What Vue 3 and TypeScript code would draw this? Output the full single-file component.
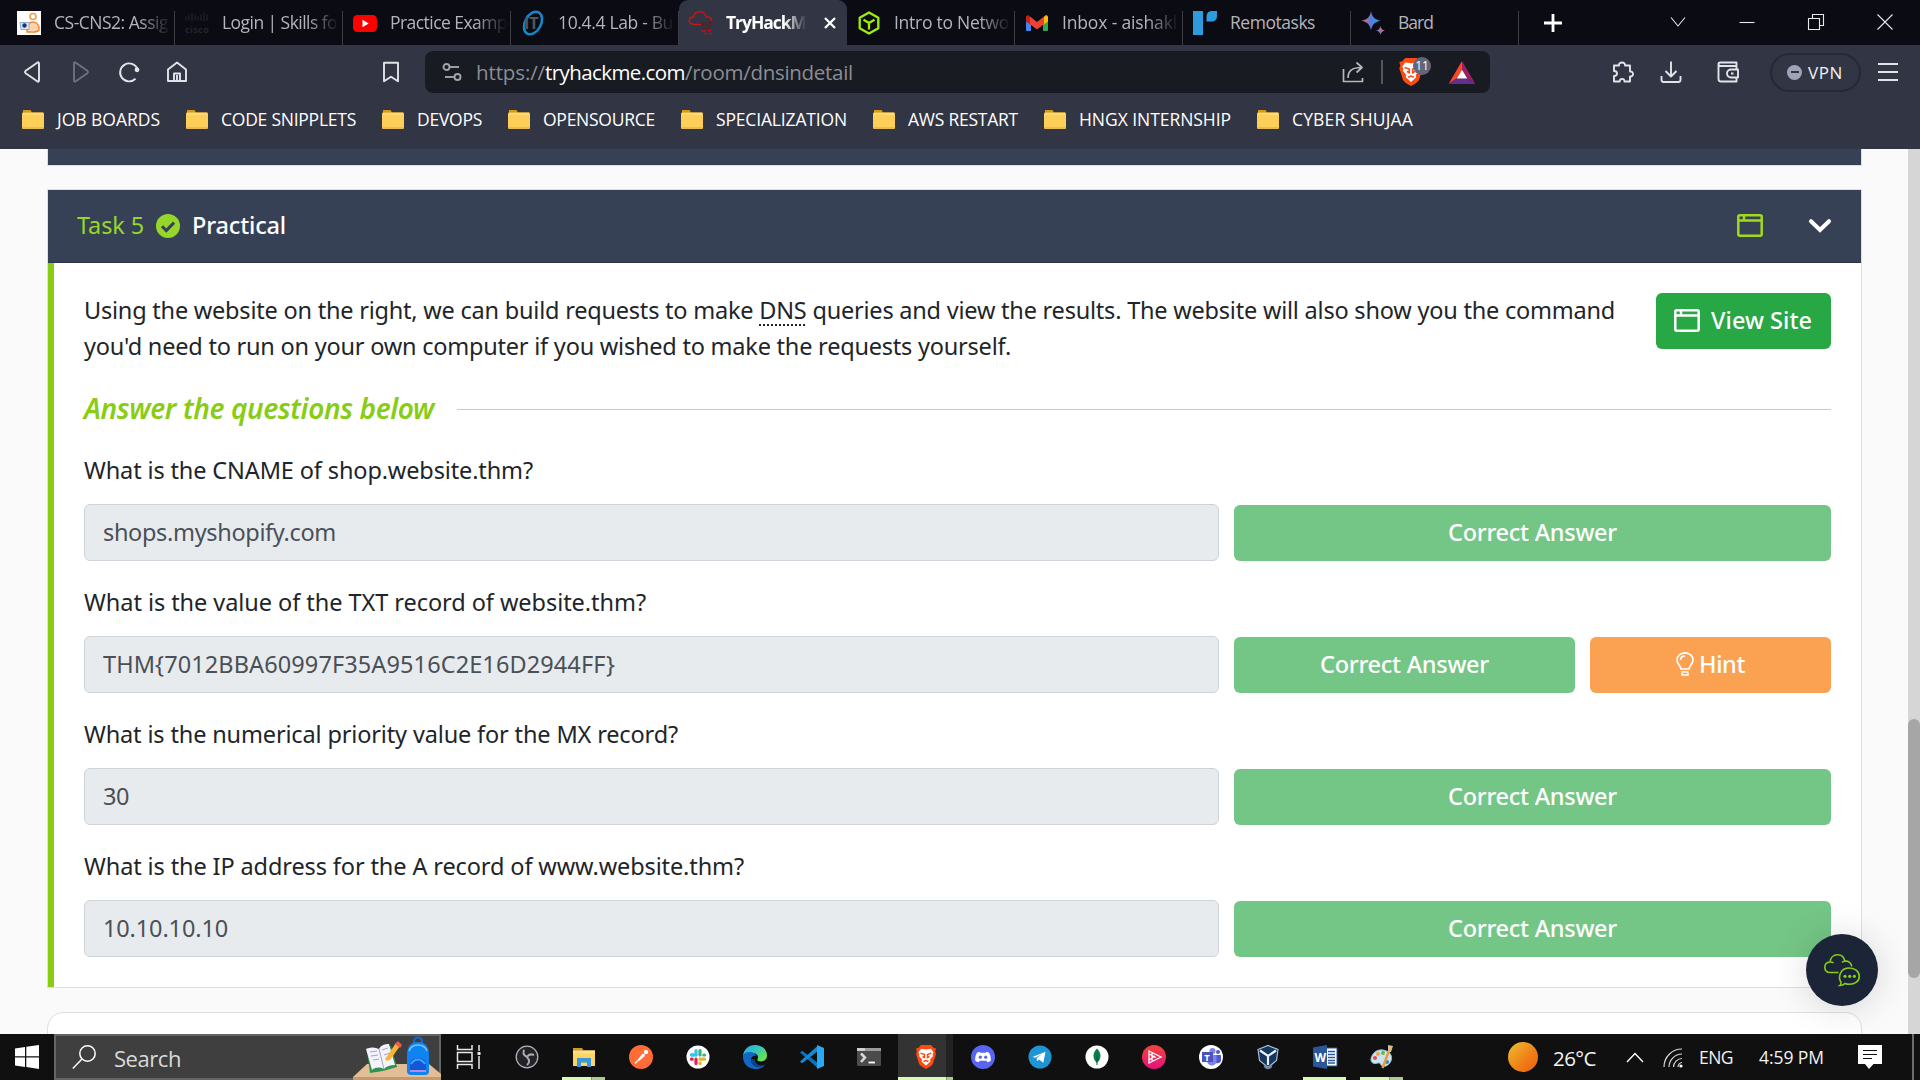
<script setup lang="ts">
const UI = '"Open Sans", "Noto Sans", sans-serif'
const PAGE = '"Noto Sans", "Open Sans", sans-serif'

const ctx = document.createElement('canvas').getContext('2d')

// Letter spacing that makes a label occupy exactly `width` pixels.
function track(text: string, width: number, size: number, family = UI, style = '400') {
  if (!ctx) return {}
  ctx.font = `${style} ${size}px ${family}`
  const natural = ctx.measureText(text).width
  return { letterSpacing: ((width - natural) / text.length).toFixed(3) + 'px' }
}

interface Tab { title: string; w: number; icon: string; active?: boolean; fade?: boolean }

const tabs: Tab[] = [
  { title: 'CS-CNS2: Assig', w: 114, fade: true, icon: '<rect width="24" height="24" fill="#fff"/><circle cx="16" cy="5.5" r="3" fill="none" stroke="#f59a4a" stroke-width="1.6"/><path d="M10 21c-1-6 2-10 6-10s7 4 6 8c-2 3-6 2-9 2z" fill="#fbd3ac" stroke="#f08a35" stroke-width="1.4"/><path d="M3 11.500h9v7H4z" fill="#dfe8f8" stroke="#98a6c8"/><circle cx="7.500" cy="14.500" r="2.200" fill="#12357c"/>' },
  { title: 'Login | Skills fo', w: 115, fade: true, icon: '<g stroke="#23232b" stroke-width="1.300" stroke-linecap="round"><path d="M1 6v3M4 4v5M7 2v8M10 4v5M13 6v3M16 4v5M19 2v8M22 4v5"/></g><text x="0" y="22" font-size="9.500" font-weight="700" textLength="24" fill="#23232b" font-family="Open Sans">cisco</text>' },
  { title: 'Practice Examp', w: 117, fade: true, icon: '<rect y="4" width="24" height="17" rx="4.500" fill="#f00"/><path d="M9.500 8.800v7.400l6.200-3.700z" fill="#fff"/>' },
  { title: '10.4.4 Lab - Bu', w: 115, fade: true, icon: '<ellipse cx="12" cy="12" rx="8" ry="12" transform="rotate(28 12 12)" fill="none" stroke="#1387c9" stroke-width="2.600"/><text x="3" y="18" font-size="16" font-weight="700" fill="#54565e" font-family="Open Sans">IT</text>' },
  { title: 'TryHackM', w: 80, active: true, fade: true, icon: '<path d="M12 13.500H5.500C2 13.500 0 11.500.4 9.200.8 7 2.600 6 4.500 6.200 5 3 7.500.8 10.700.8c3.300 0 5.600 2 6.300 5 3 0 5.500 1.600 5.800 4.200" fill="none" stroke="#c81414" stroke-width="1.600"/><path d="M13 11.500h4M19 11.500h4M12 14.500h3M17 14.500h6M14 17.500h7" stroke="#5c2029" stroke-width="1.800"/><path d="M12 20h5M19 19.500h3M15 22.500h3M20 22.500h3" stroke="#b5151b" stroke-width="1.500"/>' },
  { title: 'Intro to Netwo', w: 115, fade: true, icon: '<path d="M12 1.500l9.300 5.300v10.400L12 22.500 2.700 17.200V6.800zM6.500 8.800l5.500 3.200 5.500-3.200M12 12v6.500" fill="none" stroke="#9fef00" stroke-width="2.300" stroke-linejoin="round"/>' },
  { title: 'Inbox - aishakl', w: 115, fade: true, icon: '<path d="M1 6v12.500C1 19.500 1.500 20 2.500 20H6V9z" fill="#4285f4"/><path d="M18 9v11h3.500c1 0 1.500-.5 1.500-1.500V6z" fill="#34a853"/><path d="M1 6.500v4l5 3.600V7L4 4.800C2.500 3.600 1 4.700 1 6.500z" fill="#c5221f"/><path d="M23 6.500v4l-5 3.600V7l2-2.200c1.500-1.200 3-.1 3 1.700z" fill="#fbbc04"/><path d="M5 5.600l7 5.400 7-5.400v7.600l-7 5.400-7-5.400z" fill="#ea4335"/>' },
  { title: 'Remotasks', w: 85, icon: '<path d="M0 0h10v24H0z" fill="#2e9bdc"/><path d="M13.500 10.500V6c0-4 2-6 5.500-6h5v5c0 3.500-2 5.500-5.500 5.500z" fill="#2e9bdc"/>' },
  { title: 'Bard', w: 35, icon: '<defs><linearGradient id="bard" x1="0" x2="1"><stop offset="0" stop-color="#f0645a"/><stop offset=".5" stop-color="#5a7be0"/><stop offset="1" stop-color="#23a5e8"/></linearGradient><linearGradient id="bard2"><stop offset="0" stop-color="#5a7be0"/><stop offset="1" stop-color="#f0645a"/></linearGradient></defs><path d="M10 0c1.200 6.200 3.600 8.600 9.500 9.700C13.600 10.900 11.200 13.300 10 19.300 8.800 13.300 6.400 10.900.3 9.700 6.400 8.600 8.800 6.200 10 0z" fill="url(#bard)"/><path d="M19.500 15c.6 2.800 1.700 4 4.500 4.500-2.800.5-3.900 1.700-4.500 4.500-.6-2.800-1.700-4-4.500-4.500 2.800-.5 3.900-1.700 4.500-4.500z" fill="url(#bard2)"/>' },
]

const bookmarks = [
  { name: 'JOB BOARDS', w: 103 },
  { name: 'CODE SNIPPLETS', w: 135 },
  { name: 'DEVOPS', w: 65 },
  { name: 'OPENSOURCE', w: 112 },
  { name: 'SPECIALIZATION', w: 131 },
  { name: 'AWS RESTART', w: 110 },
  { name: 'HNGX INTERNSHIP', w: 152 },
  { name: 'CYBER SHUJAA', w: 121 },
]

const url = [
  { text: 'https://', w: 69, host: false },
  { text: 'tryhackme.com', w: 140, host: true },
  { text: '/room/dnsindetail', w: 168, host: false },
]

const intro = "Using the website on the right, we can build requests to make DNS queries and view the results. The website will also show you the command"
const intro2 = "you'd need to run on your own computer if you wished to make the requests yourself."

const questions = [
  { q: 'What is the CNAME of shop.website.thm?', qw: 449, a: 'shops.myshopify.com', aw: 233, hint: false },
  { q: 'What is the value of the TXT record of website.thm?', qw: 562, a: 'THM{7012BBA60997F35A9516C2E16D2944FF}', aw: 512, hint: true },
  { q: 'What is the numerical priority value for the MX record?', qw: 594, a: '30', aw: 26, hint: false },
  { q: 'What is the IP address for the A record of www.website.thm?', qw: 660, a: '10.10.10.10', aw: 125, hint: false },
]

const brave = '<path d="M7 0h10l2.500 2.800L22 3.500l-.8 3L22 9l-3 9.500c-.5 1.500-2 2.500-3.500 3.500L12 24l-3.500-2C7 21 5.500 20 5 18.500L2 9l.8-2.500-.8-3 2.500-.7z" fill="#fb4b12"/><path d="M12 4.500l5-.7 2.500 3.500-1 2.200.5 1.500-3 3.500.5 2-4.500 4-4.500-4 .5-2L5 11l.5-1.500-1-2.200L7 3.800z" fill="#fff"/><path d="M6.500 8.200l4 1.300v3l-2-1M17.500 8.200l-4 1.300v3l2-1M9.500 16.500l2.500-1 2.500 1" fill="none" stroke="#fb4b12" stroke-width="1.400"/>'

const apps = [
  { id: 'taskview', run: '', icon: '<g fill="none" stroke="#e8e8e8" stroke-width="1.500" transform="translate(-1 0)"><path d="M.5 0v4.500h14.500V0M.5 24v-4.500h14.500V24M.5 7.500h14.500v9H.5zM22 0v6M22 11v13"/><path d="M20.500 8.500h3" stroke-width="3"/></g>' },
  { id: 'obs', run: '', icon: '<circle cx="12" cy="12" r="10.800" fill="#232327" stroke="#b0b0b4" stroke-width="1.300"/><path d="M8.800 5.500c-.8 2.800.3 5.300 3.200 6.300M18.300 9.800c-2.700-1-5 .1-6.300 2.200M12.500 19.500c2.300-2 2-5-.5-7.200" fill="none" stroke="#a9a9ae" stroke-width="2" stroke-linecap="round"/>' },
  { id: 'explorer', run: 'double', icon: '<path d="M1 3h9l1.500 2.500H1z" fill="#d79a10"/><path d="M1 5.500h22V21H1z" fill="#fdd462"/><path d="M1 5.500h22v3H1z" fill="#ffe08a"/><path d="M5 13h14v9h-4v-4.500H9V22H5z" fill="#3a96dd"/>' },
  { id: 'postman', run: '', icon: '<circle cx="12" cy="12" r="12" fill="#ff6c37"/><path d="M6 18.500L15.500 9" stroke="#fff" stroke-width="1.400"/><path d="M9 14.500l4.500-6 2.500 2.300-5.500 5z" fill="#fff"/><circle cx="17" cy="7" r="2.200" fill="#fff"/>' },
  { id: 'slack', run: '', icon: '<circle cx="12" cy="12" r="11.500" fill="#fff"/><g stroke-width="3.200" stroke-linecap="round"><path d="M10 5.500v4.500M5.500 10h1.500" stroke="#36c5f0"/><path d="M5.500 9.800H10" stroke="#36c5f0"/><path d="M14 5.500V10M18.500 10h-.7" stroke="#2eb67d"/><path d="M14 14.200h4.500M14 18.500v-.7" stroke="#ecb22e"/><path d="M10 14.200v4.300M5.500 14.200h.7" stroke="#e01e5a"/></g>' },
  { id: 'edge', run: '', icon: '<defs><linearGradient id="eg" x1="0" y1="0" x2="1" y2=".6"><stop offset="0" stop-color="#2aa7e0"/><stop offset=".55" stop-color="#33c6c0"/><stop offset="1" stop-color="#6be04a"/></linearGradient></defs><path d="M0 11C.5 4.500 5.500 0 12 0c7 0 12 4.500 12 10.500 0 3.800-3 6-6.200 6-2.500 0-4-1-3.400-2.200 1.500-2.200.3-5.300-3.400-6C6 7.500 2 9 0 11z" fill="url(#eg)"/><path d="M0 12c0-4 4-5.500 8-5 2.500.4 4.500 2 5.200 4C10 10 8 12.300 8 15c0 4 3.500 7 8 6.800 2.800 0 5-1.300 6.200-2.300C20 22.700 16.500 24 12.500 24 5 24 0 18.500 0 12z" fill="#1068c4"/><path d="M8 14c-.3 5 4 8.500 9.500 7.500 2-.3 4-1.400 4.900-2.200-6 2.300-10.500-.3-10.400-4.800z" fill="#0b448f"/>' },
  { id: 'vscode', run: '', icon: '<path d="M0 7.500l2.200-1.800L18 18v5.500z" fill="#0b72b8"/><path d="M0 16.500l2.200 1.800L18 6V.5z" fill="#1488d2"/><path d="M17 0l7 3v18l-7 3z" fill="#29a8f5"/>' },
  { id: 'terminal', run: '', icon: '<rect y="3" width="24" height="18" rx="1" fill="#4b4b4b"/><path d="M0 3h24v3H0z" fill="#9c9c9c"/><path d="M0 3h8v3H0z" fill="#cfcfcf"/><path d="M4 8.500l4 4-4 4.500" fill="none" stroke="#d9d9d9" stroke-width="2.500"/><path d="M11.500 17.500h6.500" stroke="#fff" stroke-width="1.800"/>' },
  { id: 'brave', run: 'double', icon: brave },
  { id: 'discord', run: '', icon: '<circle cx="12" cy="12" r="12" fill="#5865f2"/><path d="M8.500 6.700l-2.500 1C4.500 10 4 13 4.200 15.700c1 .8 2.200 1.300 3.500 1.600l.9-1.500h6.800l.9 1.500c1.300-.3 2.500-.8 3.500-1.600.2-2.700-.3-5.700-1.800-8l-2.500-1-.6 1H9.100z" fill="#fff"/><circle cx="9.300" cy="12.200" r="1.600" fill="#5865f2"/><circle cx="14.700" cy="12.200" r="1.600" fill="#5865f2"/>' },
  { id: 'telegram', run: '', icon: '<circle cx="12" cy="12" r="11.500" fill="#1f95d3"/><path d="M4.500 12l13-5.300-2.200 11-4.300-3.200-2 1.800-.3-3.200 5.800-4.300-7.300 4z" fill="#fff"/>' },
  { id: 'mongo', run: '', icon: '<circle cx="12" cy="12" r="11.500" fill="#fff"/><path d="M12 3.500c3 3 4 6 3.300 9.300C14.800 15.500 13 17 12 18c-1-1-2.800-2.500-3.300-5.200C8 9.500 9 6.500 12 3.500z" fill="#0a7d4b"/><path d="M12 10v10" stroke="#0a5a3a"/>' },
  { id: 'player', run: '', icon: '<defs><linearGradient id="pl" x2="0" y2="1"><stop offset="0" stop-color="#f0453a"/><stop offset="1" stop-color="#e8107e"/></linearGradient></defs><circle cx="12" cy="12" r="12" fill="url(#pl)"/><path d="M7 6l12 6-12 6zM7 9l7 3.500M7 15l6-4M10 8v8" fill="none" stroke="#fff" stroke-width="1.300"/>' },
  { id: 'teams', run: '', icon: '<circle cx="12" cy="12" r="12" fill="#fff"/><circle cx="13.500" cy="6" r="3" fill="#7b83eb"/><circle cx="19" cy="7" r="2" fill="#5059c9"/><path d="M16 10h6v6c-1 2-3 2.500-5 2z" fill="#5059c9"/><path d="M8 10h9.500v6c0 5-7 6-9 2z" fill="#7b83eb"/><rect x="3" y="7" width="11" height="10" fill="#4b53bc"/><text x="5.200" y="15.500" font-size="9.500" font-weight="700" fill="#fff" font-family="Open Sans">T</text>' },
  { id: 'vbox', run: '', icon: '<path d="M2 4.500L12 .5l10 4-1.500 11L12 22.500 3.500 15.500z" fill="#16365f" stroke="#a9bfd6" stroke-width="1.200"/><path d="M4 5.500l8 5.500 8-5.500M12 11v9" fill="none" stroke="#e8f1fa" stroke-width="2.200"/><path d="M8.500 20.500c1 3.500 6 3.500 7 0" fill="none" stroke="#6f85a8" stroke-width="2"/>' },
  { id: 'word', run: 'single', icon: '<path d="M13 3h11v18H13z" fill="#fff" stroke="#2b579a"/><path d="M15 6.500h7M15 9.500h7M15 12.500h7M15 15.500h7M15 18h7" stroke="#2b579a" stroke-width="1.300"/><path d="M0 2.500L14 0v24L0 21.500z" fill="#2b579a"/><text x="1.500" y="17" font-size="12" font-weight="700" fill="#fff" font-family="Open Sans">W</text>' },
  { id: 'paint', run: 'double', icon: '<path d="M1 14C2 8 7 4 13 5c7 1 10 6 8 11-2 5-8 7-10 4-1-3-3-2-5-1.500C3 19 .5 17 1 14z" fill="#c6e6f5" stroke="#8ab7cf"/><circle cx="5" cy="13" r="2" fill="#e8503a"/><circle cx="8" cy="9" r="2" fill="#f0a73c"/><circle cx="13" cy="8" r="2" fill="#6db84a"/><circle cx="17" cy="17" r="2" fill="#3d83d0"/><path d="M19 6l-6.500 17" stroke="#ef9a2e" stroke-width="2.500"/><path d="M18 0l5 1-2 6h-3z" fill="#d9b98c"/>' },
]
</script>

<template>
  <div class="screen">
    <header class="tabstrip">
      <div v-for="t in tabs" :key="t.title" class="tab" :class="{ active: t.active }">
        <svg class="fav" viewBox="0 0 24 24" v-html="t.icon"></svg>
        <span class="title" :class="{ fade: t.fade }" :style="track(t.title, t.w, 17.5, UI, t.active ? '700' : '400')">{{ t.title }}</span>
        <svg v-if="t.active" class="tabclose" viewBox="0 0 12 12"><path d="M1 1l10 10M11 1L1 11" stroke="#fff" stroke-width="2.300" /></svg>
      </div>
      <svg class="plus" viewBox="0 0 20 20"><path d="M10 1v18M1 10h18" stroke="#fff" stroke-width="2.800" /></svg>
      <div class="winctl">
        <svg viewBox="0 0 24 24"><path d="M5 7.500l7 8.500 7-8.500" /></svg>
        <svg viewBox="0 0 24 24"><path d="M4.500 12.500h15" /></svg>
        <svg viewBox="0 0 24 24"><path d="M4.500 8.500h11v11h-11zM8.500 8V4.500h11v11H16" /></svg>
        <svg viewBox="0 0 24 24"><path d="M4.500 4.500l15 15M19.500 4.500l-15 15" /></svg>
      </div>
    </header>

    <nav class="toolbar">
      <svg class="ic back" viewBox="0 0 24 24"><path d="M19 3.500v17c0 1.200-1 1.500-1.800.8L5.700 13.200c-.9-.7-.9-1.700 0-2.400L17.200 2.700c.8-.7 1.800-.4 1.800.8z" /></svg>
      <svg class="ic fwd" viewBox="0 0 24 24"><path d="M5 3.500v17c0 1.200 1 1.500 1.800.8l11.500-8.100c.9-.7.9-1.700 0-2.400L6.800 2.700C6 2 5 2.300 5 3.500z" /></svg>
      <svg class="ic reload" viewBox="0 0 24 24"><path d="M18.500 18.800A9 9 0 1 1 20.500 9" /><circle cx="20" cy="9.800" r="2.400" fill="#e3e4e9" stroke="none" /></svg>
      <svg class="ic home" viewBox="0 0 24 24"><path d="M3 9.500L12 2.500l9 7V21H3zM9 21v-7.500h6V21M12 15v6" /></svg>
      <svg class="ic mark" viewBox="0 0 24 24"><path d="M5 2.800h14v18.400l-7-4.500-7 4.500z" /></svg>
      <div class="urlbox">
        <svg class="ic site" viewBox="0 0 24 24"><circle cx="6.500" cy="7" r="3" /><path d="M10 7h9" /><circle cx="17.500" cy="17" r="3" /><path d="M5 17h9" /></svg>
        <div class="url">
          <span v-for="u in url" :key="u.text" :class="{ host: u.host }" :style="track(u.text, u.w, 20.5)">{{ u.text }}</span>
        </div>
        <svg class="ic share" viewBox="0 0 24 24"><path d="M2.500 9v12.500h19V18M7 18c0-7 4-10.500 13.500-10.500M15.500 2.500l5.500 5-5.500 5" /></svg>
        <i class="bar"></i>
        <div class="shield">
          <svg viewBox="0 0 24 24" v-html="brave"></svg>
          <span class="badge">11</span>
        </div>
        <svg class="bat" viewBox="0 0 28 24"><path d="M14 0v9L8.500 18 0 24z" fill="#ff4724" /><path d="M14 0l14 24-8.500-6L14 9z" fill="#9e1f63" /><path d="M0 24l8.500-6h11l8.500 6z" fill="#662d91" /><path d="M14 9l5.500 9.200h-11z" fill="#fff" /></svg>
      </div>
      <svg class="ic puzzle" viewBox="0 0 24 24"><path d="M3 5.500h5c-.8-4 6.800-4 6 0h5v6c4-.6 4 5.600 0 5v5h-5.500c.2-3.500-5-3.500-4.800 0H3V16c4 0 4-5 0-5z" /></svg>
      <svg class="ic dl" viewBox="0 0 24 24"><path d="M12 1.500v14.500M6.500 11l5.500 5.500 5.500-5.500M2.500 16v3.500c0 1.500.5 2.500 2 2.500h15c1.500 0 2-1 2-2.500V16" /></svg>
      <svg class="ic wallet" viewBox="0 0 24 24"><path d="M20.500 9V6H4.500a2 2 0 0 1-2-2v15c0 1.500 1 2.500 2.500 2.500h15.500V18M2.500 4c0-1 .8-1.500 2-1.500h16V6M22 9.500h-7a4 4 0 0 0 0 8h7zM15 13.500h2.500" /></svg>
      <div class="vpn"><i></i><span :style="track('VPN', 35, 17)">VPN</span></div>
      <svg class="ic menu" viewBox="0 0 24 20"><path d="M2 2h20M2 10h20M2 18h20" /></svg>
    </nav>

    <nav class="bookmarks">
      <div v-for="b in bookmarks" :key="b.name" class="bm">
        <svg viewBox="0 0 22 19"><path d="M1 0h7.500l1.500 2.500H21V6H1z" fill="#d79a10" /><rect y="2.500" width="22" height="16.500" rx="1.300" fill="#fdcf58" /><path d="M1 3.500h20v1H1z" fill="#ffe597" /><path d="M.5 17.500h21v1H.5z" fill="#d9a838" /></svg>
        <span :style="{ ...track(b.name, b.w, 17.5), width: b.w + 'px' }">{{ b.name }}</span>
      </div>
    </nav>

    <main class="viewport">
      <div class="page">
        <section class="prev"></section>
        <section class="task">
          <div class="head">
            <span class="num" :style="track('Task 5', 67, 23.5, PAGE)">Task 5</span>
            <svg class="check" viewBox="0 0 24 24"><circle cx="12" cy="12" r="12" fill="#96d62b" /><path d="M6 12.300l4.300 4.300 7.700-8" fill="none" stroke="#374155" stroke-width="3" /></svg>
            <span class="name" :style="track('Practical', 94, 23.5, PAGE, '500')">Practical</span>
            <svg class="win" viewBox="0 0 26 23"><rect x="1.300" y="1.300" width="23.400" height="20.400" rx="1.500" /><path d="M1.500 6.500h23M7 1.500v5" /></svg>
            <svg class="chev" viewBox="0 0 22 14"><path d="M2 2.200l9 8.800 9-8.800" /></svg>
          </div>
          <div class="body">
            <div class="intro">
              <p>
                <span class="ln" :style="track(intro, 1531, 23.5, PAGE)">Using the website on the right, we can build requests to make <abbr>DNS</abbr> queries and view the results. The website will also show you the command</span>
                <span class="ln" :style="track(intro2, 927, 23.5, PAGE)">{{ intro2 }}</span>
              </p>
              <button class="view">
                <svg class="win" viewBox="0 0 26 23"><rect x="1.300" y="1.300" width="23.400" height="20.400" rx="1.500" /><path d="M1.500 6.500h23M7 1.500v5" /></svg>
                <span :style="track('View Site', 101, 23.5, PAGE, '500')">View Site</span>
              </button>
            </div>
            <h3><span :style="track('Answer the questions below', 350, 28, PAGE, 'italic 600')">Answer the questions below</span><i></i></h3>
            <div v-for="x in questions" :key="x.q" class="qa">
              <div class="q"><span :style="track(x.q, x.qw, 23.5, PAGE)">{{ x.q }}</span></div>
              <div class="row">
                <div class="answer"><span :style="track(x.a, x.aw, 23.5, PAGE)">{{ x.a }}</span></div>
                <button class="ok"><span :style="track('Correct Answer', 169, 23.5, PAGE, '500')">Correct Answer</span></button>
                <button v-if="x.hint" class="hint">
                  <svg viewBox="0 0 18 24"><path d="M5 17c0-3-4-5-4-9a8 7.200 0 0 1 16 0c0 4-4 6-4 9zM5.500 20h7M6 21v2h6v-2M4.500 8C4.500 5.500 6.500 4 9 4" /></svg>
                  <span :style="track('Hint', 46, 23.5, PAGE, '500')">Hint</span>
                </button>
              </div>
            </div>
          </div>
        </section>
        <section class="next"></section>
      </div>
      <div class="scroll"><i></i></div>
      <div class="chat">
        <svg viewBox="0 0 36 32"><path d="M14.500 18.500H6C2.500 18.500.8 16 .8 13.300c0-3 2.200-5 5.200-5.300C6.500 3.800 9.500.8 13.500.8c4 0 6.700 2.700 7.300 6.400 3.700-.4 6.500 1.800 7 5.300M6 8c1.500-.2 2.500.2 3.500 1M20.800 7.200c-1 .1-2 .5-2.800 1.200" /><path d="M17 28.500c-3.500-6-.5-14.500 8.300-14.500 5.700 0 10 3.500 10 8.300 0 5-4.300 8-10 8-2 0-3-.3-4.300-.8-1.500 1.500-3 2-5.300 2 1-.8 1.500-1.800 1.300-3z" /><g fill="#88cc14" stroke="none"><circle cx="21" cy="22.300" r="1.600" /><circle cx="25.700" cy="22.300" r="1.600" /><circle cx="30.400" cy="22.300" r="1.600" /></g></svg>
      </div>
    </main>

    <footer class="taskbar">
      <div class="start"><svg viewBox="0 0 24 24"><path d="M0 3.500L10 2v9.300H0zM11.300 1.800L24 0v11.300H11.300zM0 12.600h10v9.300L0 20.500zM11.300 12.600H24V24l-12.700-1.900z" fill="#fff" /></svg></div>
      <div class="search">
        <svg class="mag" viewBox="0 0 24 24"><circle cx="15.500" cy="8.500" r="7.700" /><path d="M10 14L.8 23.500" /></svg>
        <span :style="track('Search', 67, 22)">Search</span>
        <svg class="art" viewBox="0 0 88 46">
          <path d="M0 43l14-13h62l12 10v6H0z" fill="#e3bd96" /><path d="M0 43h88v3H0z" fill="#c39a6f" />
          <path d="M14 17l13-2 11-3 6 21-14 4-13 2z" fill="#2f9350" />
          <path d="M13 15c5-2 9-2 13 0 2-4 6-5 10-5l6 21c-5 0-8 1-11 4-4-2-8-2-12 1z" fill="#f4f2fa" />
          <path d="M26 15l5 20M17 18l7-1M18 22l7-1M20 26l6-1M29 16l6-2M31 21l6-2M32 25l6-2" stroke="#a9a3c8" fill="none" />
          <path d="M43 9l4 3-10 14-4 1 .5-4z" fill="#fbb535" /><path d="M42 10l3-3 4 4-2 3z" fill="#f15a4a" />
          <path d="M61 9V7a4 3.500 0 0 1 8 0v2" fill="none" stroke="#1667d8" stroke-width="2" />
          <path d="M54 21c0-9 4-13 11-13s11 4 11 13v16c0 3-2 4-4 4H58c-2 0-4-1-4-4z" fill="#0e83f2" /><path d="M56 17c3-8 15-8 18 0" fill="none" stroke="#7cc8fb" stroke-width="1.500" /><path d="M57 30c0-8 16-8 16 0v8H57z" fill="#1257d6" /><path d="M58 30c4-6 10-6 14 0" fill="none" stroke="#3fa6fa" stroke-width="2" /><path d="M57 37h16" stroke="#b38bf5" stroke-width="2" />
        </svg>
      </div>
      <div v-for="a in apps" :key="a.id" class="app" :class="[a.run, { current: a.id === 'brave' }]">
        <svg viewBox="0 0 24 24" v-html="a.icon"></svg>
      </div>
      <div class="tray">
        <i class="sun"></i>
        <span class="temp" :style="track('26°C', 43, 20.5)">26°C</span>
        <svg class="up" viewBox="0 0 18 11"><path d="M1 10l8-8.500L17 10" /></svg>
        <svg class="wifi" viewBox="0 0 20 20"><path d="M1 19C1 9 9 1 19 1M6 19C6 12 12 6 19 6M10.500 19c0-4.500 4-8.500 8.500-8.500M15 19c0-2.500 2-4.500 4-4.500" /><circle cx="18" cy="18" r="1.600" /></svg>
        <span class="lang" :style="track('ENG', 34, 17.5)">ENG</span>
        <span class="time" :style="track('4:59 PM', 65, 17.5)">4:59 PM</span>
        <svg class="note" viewBox="0 0 24 24"><path d="M0 0h24v19h-8.500L11 24l-4-5H0z" fill="#fff" /><path d="M5 5.500h14M5 9.500h14M5 13.500h9" stroke="#101010" stroke-width="1.200" /></svg>
        <i class="peek"></i>
      </div>
    </footer>
  </div>
</template>

<style>
body { margin: 0; overflow: hidden; }
</style>

<style scoped>
* { box-sizing: border-box; }
.screen { width: 1920px; height: 1080px; overflow: hidden; display: flex; flex-direction: column; font-family: "Open Sans", "Noto Sans", sans-serif; background: #fafafa; }
svg { display: block; flex: none; overflow: visible; }
span { white-space: nowrap; }
button { border: 0; padding: 0; font: inherit; color: inherit; }

.tabstrip { height: 45px; flex: none; background: #0b0b14; display: flex; align-items: center; padding-left: 7px; }
.tab { position: relative; width: 168px; height: 45px; flex: none; display: flex; align-items: center; padding-left: 10px; color: #b4b5ba; font-size: 17.5px; }
.tab::after { content: ""; position: absolute; right: 0; top: 11px; width: 1px; height: 34px; background: #3d3d42; }
.tab.active { background: #323543; border-radius: 9px 9px 0 0; color: #fff; font-weight: 700; }
.tab.active::after { display: none; }
.fav { width: 24px; height: 24px; }
.title { margin-left: 13px; width: 118px; flex: none; overflow: hidden; padding-bottom: 1px; }
.title.fade { -webkit-mask-image: linear-gradient(90deg, #000 72%, transparent 99%); mask-image: linear-gradient(90deg, #000 72%, transparent 99%); }
.active .title { width: 81px; }
.tabclose { width: 12px; height: 12px; margin-left: 17px; }
.plus { width: 20px; height: 20px; margin-left: 24px; }
.winctl { margin-left: auto; display: flex; gap: 45px; padding: 0 23px 2px 0; }
.winctl svg { width: 24px; height: 24px; fill: none; stroke: #e9e9ec; stroke-width: 1.1; }

.toolbar { height: 54px; flex: none; background: #323543; display: flex; align-items: center; }
.ic { width: 24px; height: 24px; fill: none; stroke: #e3e4e9; stroke-width: 1.9; stroke-linejoin: round; }
.back { margin-left: 20px; }
.fwd { margin-left: 25px; opacity: .35; }
.reload { margin-left: 24px; }
.home { margin-left: 24px; }
.mark { margin-left: 190px; }
.urlbox { height: 42px; width: 1065px; margin-left: 22px; background: #191b23; border-radius: 8px; display: flex; align-items: center; }
.site { margin-left: 15px; stroke: #a2a4ab; }
.url { margin-left: 12px; width: 865px; display: flex; font-size: 20.5px; color: #8b8d94; }
.url .host { color: #fff; }
.share { stroke: #b6b8bf; stroke-width: 1.7; }
.bar { width: 2px; height: 24px; background: #55575f; margin-left: 16px; }
.shield { position: relative; margin-left: 14px; }
.shield svg { width: 28px; height: 28px; }
.badge { position: absolute; left: 16px; top: -1px; width: 18px; height: 18px; border-radius: 9px; background: #62667a; color: #fff; font-size: 12px; line-height: 18px; text-align: center; }
.bat { width: 28px; height: 23px; margin-left: 23px; }
.puzzle { margin-left: 121px; }
.dl { margin-left: 24px; }
.wallet { margin-left: 33px; }
.vpn { width: 91px; height: 39px; margin-left: 30px; border: 2px solid #262835; border-radius: 20px; display: flex; align-items: center; padding-left: 15px; color: #f1f1f4; font-size: 17px; }
.vpn i { width: 15px; height: 15px; border-radius: 8px; background: linear-gradient(#323543, #323543) center / 8px 2px no-repeat #a0a2b8; margin-right: 6px; }
.menu { margin-left: 15px; height: 20px; }

.bookmarks { height: 50px; flex: none; background: #323543; display: flex; gap: 26px; padding: 0 0 9px 22px; color: #fff; font-size: 17.5px; }
.bm { display: flex; align-items: center; }
.bm svg { width: 22px; height: 19px; margin-right: 13px; }
.bm span { flex: none; padding-bottom: 1px; }

.viewport { position: relative; height: 885px; flex: none; background: #fafafa; display: flex; overflow: hidden; font-family: "Noto Sans", "Open Sans", sans-serif; font-size: 23.5px; color: #212529; }
.page { width: 1908px; padding: 0 46px 0 47px; display: flex; flex-direction: column; }
.prev { height: 17px; flex: none; background: #374155; border: 1px solid #dfdfdf; border-top: 0; }
.task { margin-top: 23px; flex: none; height: 799px; border: 1px solid #dfdfdf; background: #fff; }
.head { height: 73px; background: #374155; border-bottom: 1px solid #2c3548; display: flex; align-items: center; padding: 0 30px 1px 29px; }
.head .num { color: #96d62b; width: 67px; padding-bottom: 2px; }
.check { width: 24px; height: 24px; margin-left: 12px; }
.name { margin-left: 12px; color: #fff; font-weight: 500; padding-bottom: 2px; }
.win { width: 26px; height: 23px; fill: none; stroke: #a3d91c; stroke-width: 2.5; }
.head .win { margin-left: auto; }
.chev { width: 22px; height: 14px; margin-left: 46px; fill: none; stroke: #fff; stroke-width: 4; stroke-linecap: round; }
.body { height: 724px; border-left: 6px solid #88cc14; padding: 29px 30px 0 30px; }
.intro { height: 97px; display: flex; justify-content: space-between; align-items: flex-start; }
p { margin: 0; line-height: 36px; }
.ln { display: block; }
abbr { text-decoration: underline dotted 1.5px; text-underline-offset: 5px; }
.view { width: 175px; height: 56px; margin-top: 1px; border-radius: 6px; background: #28a745; color: #fff; font-weight: 500; display: flex; align-items: center; padding: 0 0 2px 18px; gap: 11px; }
.view .win { stroke: #fff; }
h3 { margin: 0 0 23px; height: 40px; display: flex; align-items: center; font-size: 28px; font-weight: 600; font-style: italic; color: #88cc14; }
h3 span { width: 350px; flex: none; padding-bottom: 2px; }
h3 i { flex: 1; height: 1px; background: #c9c9c9; margin-left: 23px; }
.qa { height: 132px; }
.q { height: 52px; line-height: 37px; }
.row { display: flex; align-items: flex-end; }
.answer { width: 1135px; height: 57px; flex: none; border: 1px solid #ced4da; border-radius: 6px; background: #e8ebee; color: #495057; display: flex; align-items: center; padding: 0 0 2px 18px; }
.ok, .hint { height: 56px; border-radius: 6px; margin-left: 15px; color: #fff; font-weight: 500; display: flex; align-items: center; justify-content: center; padding-bottom: 2px; }
.ok { flex: 1; background: #74c686; }
.hint { width: 241px; background: #faa152; gap: 5px; }
.hint svg { width: 18px; height: 24px; fill: none; stroke: #fff; stroke-width: 1.7; }
.next { margin-top: 24px; height: 60px; flex: none; border: 1px solid #dfdfdf; border-radius: 16px 16px 0 0; background: #fff; }
.scroll { width: 12px; background: #d6d6d6; padding-top: 570px; }
.scroll i { display: block; height: 259px; border-radius: 6px; background: #a6a6a6; }
.chat { position: absolute; left: 1806px; top: 785px; width: 72px; height: 72px; border-radius: 50%; background: #1c2538; box-shadow: 0 2px 36px rgba(0, 0, 0, .15); display: flex; align-items: center; justify-content: center; }
.chat svg { width: 36px; height: 32px; fill: none; stroke: #88cc14; stroke-width: 1.6; }

.taskbar { height: 46px; flex: none; background: #101010; display: flex; color: #fff; }
.start { width: 54px; display: flex; align-items: center; padding-left: 15px; }
.start svg { width: 24px; height: 24px; }
.search { width: 387px; border: 2px solid #656565; background: #3f3f3f; display: flex; align-items: center; padding-left: 16px; font-size: 22px; color: #dadada; }
.mag { width: 24px; height: 24px; margin-right: 18px; fill: none; stroke: #fff; stroke-width: 1.5; }
.search span { padding-top: 1px; }
.art { width: 88px; height: 46px; margin: 0 -2px 0 auto; }
.app { position: relative; width: 57px; display: flex; align-items: center; justify-content: center; }
.app svg { width: 24px; height: 24px; }
.app.single::after, .app.double::after { content: ""; position: absolute; left: 7px; bottom: 0; width: 43px; height: 3px; background: #d8fbb0; }
.app.double::after { background: linear-gradient(90deg, #d8fbb0 29px, #7c9a66 29px 30px, #adc98f 30px); }
.app.current { background: linear-gradient(90deg, transparent 1px, #333 1px 49px, #222 49px 56px, transparent 56px); }
.app.current::after { left: 1px; width: 55px; background: linear-gradient(90deg, #d8fbb0 48px, #7c9a66 48px 49px, #adc98f 49px); }
.tray { flex: 1; display: flex; align-items: center; font-size: 17.5px; color: #f2f2f2; }
.sun { width: 30px; height: 30px; border-radius: 50%; margin-left: 98px; background: linear-gradient(135deg, #edbe33, #f07d15 60%, #ee5e0c); }
.temp { margin-left: 15px; width: 43px; font-size: 20.5px; padding-top: 1px; }
.up { width: 18px; height: 11px; margin-left: 30px; fill: none; stroke: #fff; stroke-width: 1.4; }
.wifi { width: 20px; height: 20px; margin: 2px 0 0 19px; fill: none; stroke: #d8d8d8; stroke-width: 1.2; }
.wifi circle { fill: #fff; stroke: none; }
.lang { margin-left: 16px; width: 34px; }
.time { margin-left: 26px; width: 65px; }
.note { width: 24px; height: 24px; margin-left: 34px; }
.peek { width: 2px; height: 46px; margin-left: 30px; background: #6b6b6b; }
</style>
